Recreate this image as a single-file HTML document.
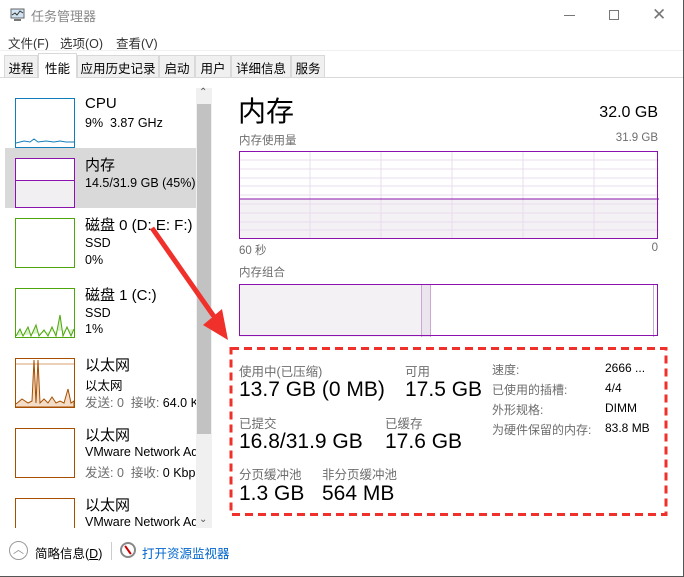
<!DOCTYPE html>
<html><head><meta charset="utf-8"><style>
*{margin:0;padding:0;box-sizing:border-box}
body{width:684px;height:577px;background:#fff;font-family:"Liberation Sans","Noto Sans CJK SC",sans-serif;position:relative;overflow:hidden;color:#000}
.a{position:absolute;white-space:nowrap}
.g{color:#6d6d6d}
.lbl{font-size:12.5px;color:#6d6d6d}
.big{font-size:21px}
.tab{position:absolute;top:55px;height:22px;border:1px solid #d9d9d9;border-bottom:none;background:#f0f0f0;font-size:12.5px;padding:2px 0 0;text-align:center;white-space:nowrap;overflow:hidden}
.thumb{position:absolute;left:15px;width:60px;height:50px;border:1px solid}
.it1{font-size:15px}
.it2{font-size:12.5px}
#lst{position:absolute;left:0;top:88px;width:196px;height:440px;overflow:hidden}
#lst .a,#lst .thumb{margin-top:-88px}
</style></head><body>
<div class="a" style="right:0;top:0;width:1px;height:577px;background:#555"></div>
<div class="a" style="left:0;bottom:0;width:684px;height:1px;background:#555"></div>
<!-- title -->
<svg class="a" style="left:9px;top:8px" width="16" height="14"><rect x="2" y="1" width="13" height="9" fill="#cfe3f3" stroke="#666"/><polyline points="3,7 6,5 8,7 11,3 14,5" fill="none" stroke="#333"/><rect x="5" y="11" width="7" height="2" fill="#777"/></svg>
<div class="a g" style="left:31px;top:6px;font-size:13px;color:#888">任务管理器</div>
<div class="a" style="left:564px;top:15px;width:11px;height:1px;background:#777"></div>
<div class="a" style="left:609px;top:10px;width:10px;height:10px;border:1px solid #777"></div>
<div class="a" style="left:652px;top:5px;font-size:17px;color:#777">✕</div>
<!-- menu -->
<div class="a" style="left:8px;top:33px;font-size:12.5px;color:#333">文件(F)</div>
<div class="a" style="left:60px;top:33px;font-size:12.5px;color:#333">选项(O)</div>
<div class="a" style="left:116px;top:33px;font-size:12.5px;color:#333">查看(V)</div>
<div class="a" style="left:0;top:50px;width:683px;height:1px;background:#f0f0f0"></div>
<!-- tabs -->
<div class="a" style="left:0;top:77px;width:683px;height:1px;background:#d9d9d9"></div>
<div class="tab" style="left:4px;width:34px">进程</div>
<div class="tab" style="left:38px;width:39px;top:53px;height:25px;background:#fff;padding-top:4px">性能</div>
<div class="tab" style="left:77px;width:82px">应用历史记录</div>
<div class="tab" style="left:159px;width:36px">启动</div>
<div class="tab" style="left:195px;width:36px">用户</div>
<div class="tab" style="left:231px;width:60px">详细信息</div>
<div class="tab" style="left:291px;width:34px">服务</div>
<!-- left list -->
<div class="a" style="left:196px;top:88px;width:16px;height:440px;background:#f0f0f0"></div>
<div class="a" style="left:197px;top:104px;width:14px;height:330px;background:#c2c2c2"></div>
<div class="a" style="left:199px;top:87px;font-size:10px;color:#555">⌃</div>
<div class="a" style="left:199px;top:514px;font-size:10px;color:#555">⌄</div>
<div id="lst">
<div class="a" style="left:5px;top:148px;width:191px;height:60px;background:#d9d9d9"></div>
<div class="thumb" style="top:98px;border-color:#117dbb"><svg width="58" height="48" style="position:absolute;left:0;top:0"><polyline points="0,44 8,42 14,43 18,40 22,43 30,42 38,43 44,42 50,43 58,43" fill="none" stroke="#117dbb"/></svg></div>
<div class="a it1" style="left:85px;top:95px">CPU</div>
<div class="a it2" style="left:85px;top:116px">9%&nbsp; 3.87 GHz</div>

<div class="thumb" style="top:158px;border-color:#8b12ae;background:linear-gradient(#fff 0 21px,#8b12ae 21px 22px,#f1eff2 22px)"></div>
<div class="a it1" style="left:85px;top:154px">内存</div>
<div class="a it2" style="left:85px;top:176px">14.5/31.9 GB (45%)</div>

<div class="thumb" style="top:218px;border-color:#4da60c"></div>
<div class="a it1" style="left:85px;top:214px">磁盘 0 (D: E: F:)</div>
<div class="a it2" style="left:85px;top:236px">SSD</div>
<div class="a it2" style="left:85px;top:253px">0%</div>

<div class="thumb" style="top:288px;border-color:#4da60c"><svg width="58" height="48" style="position:absolute"><polyline points="0,47 4,40 7,47 12,38 15,47 20,36 23,47 28,41 32,47 36,38 40,47 44,26 47,47 51,38 55,47 58,40" fill="#d8efc8" stroke="#4da60c"/></svg></div>
<div class="a it1" style="left:85px;top:284px">磁盘 1 (C:)</div>
<div class="a it2" style="left:85px;top:306px">SSD</div>
<div class="a it2" style="left:85px;top:322px">1%</div>

<div class="thumb" style="top:358px;border-color:#a74f01"><svg width="58" height="48" style="position:absolute"><line x1="0" y1="5" x2="58" y2="5" stroke="#d9a070"/><polyline points="0,45 6,40 12,44 16,42 18,1 20,44 22,1 24,44 28,40 32,44 36,38 40,44 44,42 48,44 52,30 55,44 58,42 58,48 0,48" fill="#f3ddc8" stroke="#a74f01"/></svg></div>
<div class="a it1" style="left:85px;top:354px">以太网</div>
<div class="a it2" style="left:85px;top:375px">以太网</div>
<div class="a it2 g" style="left:85px;top:392px">发送: 0&nbsp; 接收: <span style="color:#000">64.0 Kbps</span></div>

<div class="thumb" style="top:428px;border-color:#a74f01"></div>
<div class="a it1" style="left:85px;top:424px">以太网</div>
<div class="a it2" style="left:85px;top:445px">VMware Network Adapter</div>
<div class="a it2 g" style="left:85px;top:462px">发送: 0&nbsp; 接收: <span style="color:#000">0 Kbps</span></div>

<div class="thumb" style="top:498px;border-color:#a74f01"></div>
<div class="a it1" style="left:85px;top:494px">以太网</div>
<div class="a it2" style="left:85px;top:515px">VMware Network Adapter</div>
</div>

<!-- footer -->
<div class="a" style="left:9px;top:541px;width:19px;height:19px;border:1px solid #999;border-radius:50%;font-size:11px;color:#888;text-align:center;line-height:17px">︿</div>
<div class="a" style="left:35px;top:543px;font-size:12.5px">简略信息(<u>D</u>)</div>
<div class="a" style="left:111px;top:542px;width:1px;height:18px;background:#ccc"></div>
<div class="a" style="left:120px;top:542px;width:16px;height:16px;border:2px solid #888;border-radius:50%;background:#fff"><div style="position:absolute;left:5px;top:1px;width:2px;height:10px;background:#c00;transform:rotate(-35deg)"></div></div>
<div class="a" style="left:142px;top:543px;font-size:12.5px;color:#0066cc">打开资源监视器</div>

<!-- right -->
<div class="a" style="left:238px;top:90px;font-size:28px">内存</div>
<div class="a" style="right:26px;top:104px;font-size:16px">32.0 GB</div>
<div class="a lbl" style="left:239px;top:132px;font-size:11.5px">内存使用量</div>
<div class="a lbl" style="right:26px;top:132px;font-size:11.5px">31.9 GB</div>
<svg class="a" style="left:239px;top:151px" width="420" height="88">
<rect x="0.5" y="48" width="419" height="39" fill="#f3f1f4"/>
<g stroke="#eadcee"><line x1="0" y1="9" x2="420" y2="9"/><line x1="0" y1="18" x2="420" y2="18"/><line x1="0" y1="27" x2="420" y2="27"/><line x1="0" y1="35" x2="420" y2="35"/><line x1="0" y1="44" x2="420" y2="44"/><line x1="0" y1="53" x2="420" y2="53"/><line x1="0" y1="62" x2="420" y2="62"/><line x1="0" y1="71" x2="420" y2="71"/><line x1="0" y1="79" x2="420" y2="79"/>
<line x1="71" y1="0" x2="71" y2="88"/><line x1="142" y1="0" x2="142" y2="88"/><line x1="213" y1="0" x2="213" y2="88"/><line x1="284" y1="0" x2="284" y2="88"/><line x1="355" y1="0" x2="355" y2="88"/></g>
<line x1="0" y1="48" x2="420" y2="48" stroke="#8b12ae"/>
<rect x="0.5" y="0.5" width="418" height="87" fill="none" stroke="#8b12ae"/></svg>
<div class="a lbl" style="left:239px;top:242px;font-size:11.5px">60 秒</div>
<div class="a lbl" style="right:26px;top:242px;font-size:11.5px">0</div>
<div class="a lbl" style="left:239px;top:264px;font-size:11.5px">内存组合</div>
<svg class="a" style="left:239px;top:284px" width="420" height="53">
<rect x="0" y="0" width="182" height="53" fill="#f3f1f4"/><rect x="182" y="0" width="9" height="53" fill="#ece4ef"/>
<line x1="182.5" y1="0" x2="182.5" y2="53" stroke="#c9a8d4"/><line x1="191.5" y1="0" x2="191.5" y2="53" stroke="#c9a8d4"/><line x1="414.5" y1="0" x2="414.5" y2="53" stroke="#c9a8d4"/>
<rect x="0.5" y="0.5" width="418" height="51" fill="none" stroke="#8b12ae"/></svg>

<!-- stats -->
<div class="a lbl" style="left:239px;top:361px">使用中(已压缩)</div>
<div class="a big" style="left:239px;top:378px">13.7 GB (0 MB)</div>
<div class="a lbl" style="left:405px;top:361px">可用</div>
<div class="a big" style="left:405px;top:378px">17.5 GB</div>
<div class="a lbl" style="left:239px;top:413px">已提交</div>
<div class="a big" style="left:239px;top:430px">16.8/31.9 GB</div>
<div class="a lbl" style="left:385px;top:413px">已缓存</div>
<div class="a big" style="left:385px;top:430px">17.6 GB</div>
<div class="a lbl" style="left:239px;top:464px">分页缓冲池</div>
<div class="a big" style="left:239px;top:482px">1.3 GB</div>
<div class="a lbl" style="left:322px;top:464px">非分页缓冲池</div>
<div class="a big" style="left:322px;top:482px">564 MB</div>
<div class="a lbl" style="left:492px;top:361px;font-size:12px">速度:</div>
<div class="a" style="left:605px;top:361px;font-size:12px">2666 ...</div>
<div class="a lbl" style="left:492px;top:381px;font-size:12px">已使用的插槽:</div>
<div class="a" style="left:605px;top:381px;font-size:12px">4/4</div>
<div class="a lbl" style="left:492px;top:401px;font-size:12px">外形规格:</div>
<div class="a" style="left:605px;top:401px;font-size:12px">DIMM</div>
<div class="a lbl" style="left:492px;top:421px;font-size:12px">为硬件保留的内存:</div>
<div class="a" style="left:605px;top:421px;font-size:12px">83.8 MB</div>

<svg class="a" style="left:0;top:0" width="684" height="577">
<rect x="231" y="348.5" width="435" height="166" fill="none" stroke="#f0302a" stroke-width="3" stroke-dasharray="8,5"/>
<line x1="152" y1="228" x2="215" y2="318" stroke="#f0302a" stroke-width="5"/>
<polygon points="228,340 203,325 222,309" fill="#f0302a"/>
</svg>
</body></html>
